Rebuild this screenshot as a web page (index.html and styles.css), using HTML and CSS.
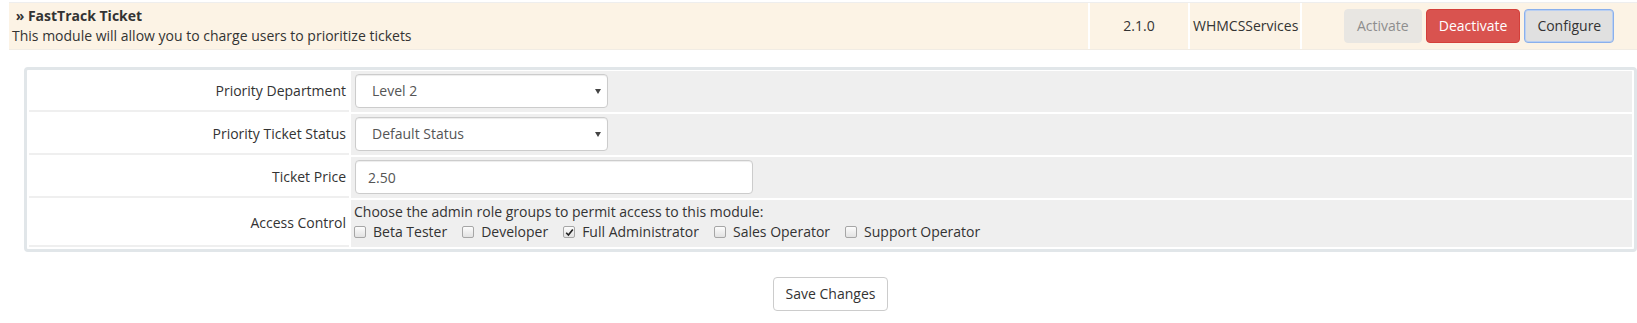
FILE: index.html
```html
<!DOCTYPE html>
<html lang="en">
<head>
  <meta charset="UTF-8" />
  <title>Addon Modules</title>
  <link rel="stylesheet" href="styles.css">
</head>
<body>
  <div class="modules">
    <div class="module-row">
      <div class="cell cell-name">
        <strong>&nbsp;» FastTrack Ticket</strong><br>
        This module will allow you to charge users to prioritize tickets
      </div>
      <div class="cell cell-version">2.1.0</div>
      <div class="cell cell-author">WHMCSServices</div>
      <div class="cell cell-actions">
        <button class="btn btn-disabled" disabled>Activate</button>
        <button class="btn btn-danger">Deactivate</button>
        <button class="btn btn-default btn-focus">Configure</button>
      </div>
    </div>
  </div>

  <form class="config" onsubmit="return false;">
    <div class="form-table">
      <div class="row">
        <div class="fieldlabel">Priority Department</div>
        <div class="fieldarea">
          <div class="select-wrap">
            <select class="form-control select-inline"><option>Level 2</option></select>
          </div>
        </div>
      </div>
      <div class="row">
        <div class="fieldlabel">Priority Ticket Status</div>
        <div class="fieldarea">
          <div class="select-wrap">
            <select class="form-control select-inline"><option>Default Status</option></select>
          </div>
        </div>
      </div>
      <div class="row">
        <div class="fieldlabel">Ticket Price</div>
        <div class="fieldarea">
          <input type="text" class="form-control input-price" value="2.50" />
        </div>
      </div>
      <div class="row">
        <div class="fieldlabel">Access Control</div>
        <div class="fieldarea fieldarea-text">
          Choose the admin role groups to permit access to this module:
          <div class="checks">
            <label class="check"><span class="box"></span>Beta Tester</label>
            <label class="check"><span class="box"></span>Developer</label>
            <label class="check"><span class="box checked"><svg width="9" height="9" viewBox="0 0 9 9"><path d="M1.2 4.8 L3.4 7 L7.8 1.4" fill="none" stroke="#222" stroke-width="1.6"/></svg></span>Full Administrator</label>
            <label class="check"><span class="box"></span>Sales Operator</label>
            <label class="check"><span class="box"></span>Support Operator</label>
          </div>
        </div>
      </div>
    </div>
    <div class="save">
      <button class="btn btn-default">Save Changes</button>
    </div>
  </form>
</body>
</html>
```

FILE: styles.css
```css
body {
  margin: 0;
  background: #fff;
  color: #333;
  font-family: "Open Sans", Arial, sans-serif;
  font-size: 14px;
  line-height: 20px;
}
.modules {
  margin: 2px 0 0 9px;
  border-top: 1px solid #eee;
}
.module-row {
  display: flex;
  gap: 2px;
  background: #fff;
  border-bottom: 1px solid #f1ece4;
}
.cell {
  background: #fcf3e5;
  padding: 3px;
}
.cell-name {
  flex: 1;
}
.cell-version {
  width: 98px;
  box-sizing: border-box;
  display: flex;
  align-items: center;
  justify-content: center;
}
.cell-author {
  width: 110px;
  box-sizing: border-box;
  display: flex;
  align-items: center;
}
.cell-actions {
  width: 335px;
  box-sizing: border-box;
  padding-left: 42px;
  display: flex;
  align-items: center;
  gap: 4px;
}
.btn {
  display: inline-block;
  padding: 6px 12px;
  font-family: inherit;
  font-size: 14px;
  line-height: 20px;
  border: 1px solid transparent;
  border-radius: 4px;
  cursor: pointer;
  white-space: nowrap;
}
.btn-disabled {
  background: #e8e6e2;
  border-color: #e8e6e2;
  color: #8e8e8e;
  cursor: default;
}
.btn-danger {
  background: #d9534f;
  border-color: #d43f3a;
  color: #fff;
}
.btn-default {
  background: #fff;
  border-color: #ccc;
  color: #333;
}
.btn-focus {
  background: #e0e0e0;
  border-color: #8ab0ec;
  box-shadow: inset 0 0 0 1px #b9cff2;
}
.config {
  margin: 17px 0 0 24px;
}
.form-table {
  display: grid;
  gap: 2px;
  padding: 1px 2px 2px;
  background: #fff;
  border: 3px solid #e1e6e9;
  border-radius: 4px;
}
.row {
  display: grid;
  grid-template-columns: 320px 1fr;
  gap: 2px;
}
.fieldlabel {
  display: flex;
  align-items: center;
  justify-content: flex-end;
  padding-right: 3px;
  border-bottom: 2px solid #efefef;
  text-align: right;
}
.fieldarea {
  background: #efefef;
  padding: 3px 4px 4px;
}
.fieldarea-text {
  padding: 2px 3px 5px;
}
.form-control {
  box-sizing: border-box;
  height: 34px;
  padding: 6px 12px;
  font-family: inherit;
  font-size: 14px;
  line-height: 20px;
  color: #555;
  background: #fff;
  border: 1px solid #ccc;
  border-radius: 4px;
  box-shadow: inset 0 1px 1px rgba(0, 0, 0, 0.075);
}
.select-wrap {
  position: relative;
  width: 253px;
}
.select-wrap::after {
  content: "";
  position: absolute;
  right: 7px;
  top: 15px;
  border-left: 3px solid transparent;
  border-right: 3px solid transparent;
  border-top: 5px solid #444;
}
.select-inline {
  -webkit-appearance: none;
  appearance: none;
  width: 253px;
  padding-left: 16px;
}
.input-price {
  width: 398px;
}
.checks {
  display: flex;
  align-items: center;
}
.check {
  display: flex;
  align-items: center;
  margin-right: 15px;
}
.box {
  box-sizing: border-box;
  width: 12px;
  height: 12px;
  margin-right: 7px;
  border: 1px solid #a6a6a6;
  border-radius: 2px;
  background: linear-gradient(#fcfcfc, #e2e2e2);
  display: flex;
  align-items: center;
  justify-content: center;
}
.save {
  text-align: center;
  margin-top: 25px;
}
```
